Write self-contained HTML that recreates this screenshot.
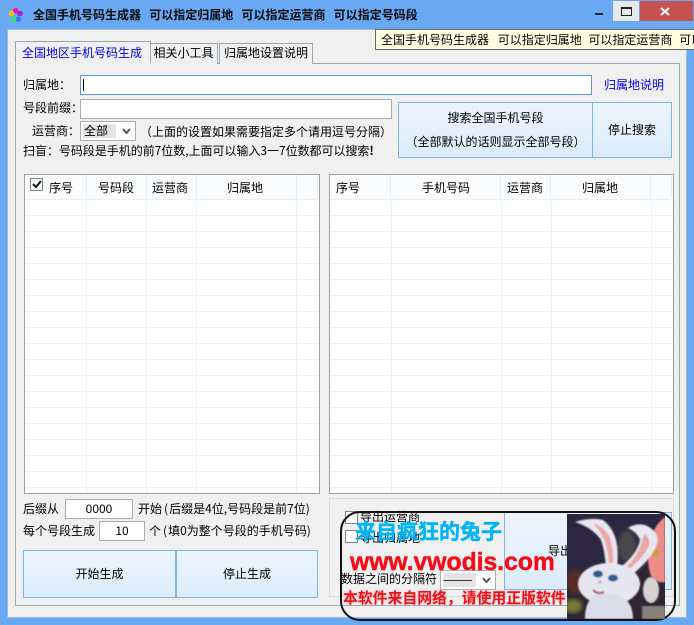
<!DOCTYPE html>
<html><head><meta charset="utf-8">
<style>
html,body{margin:0;padding:0}
body{width:694px;height:625px;position:relative;overflow:hidden;background:#69a9f3;font-family:"WenQuanYi Zen Hei","Noto Sans CJK SC",sans-serif;font-size:12px;color:#000}
.a{position:absolute;box-sizing:border-box;white-space:nowrap}
.t{position:absolute;white-space:nowrap;line-height:16px;height:16px}
.btn{position:absolute;box-sizing:border-box;border:1px solid #7eb4ea;background:linear-gradient(#ecf4fc,#dcecfc);text-align:center}
.in{position:absolute;box-sizing:border-box;background:#fff;border:1px solid #abadb3;text-align:center;line-height:18px}
.sel{position:absolute;box-sizing:border-box;background:#fff;border:1px solid #abadb3}
.grid{position:absolute;box-sizing:border-box;background:#fff;border:1px solid #a0a0a0;overflow:hidden}
.tab{position:absolute;box-sizing:border-box;background:#f0f0f0;border:1px solid #98a8b4;border-bottom:0;text-align:center;line-height:18px}
</style></head><body>

<!-- title bar -->
<svg class="a" style="left:8px;top:6px" width="18" height="18" viewBox="0 0 18 18">
<circle cx="7.700" cy="4.700" r="2.800" fill="#f0149c"/><circle cx="12" cy="7.500" r="2.800" fill="#9a28d8"/><circle cx="10.300" cy="13.300" r="2.800" fill="#3c78e8"/><circle cx="5.300" cy="13" r="2.800" fill="#38e070"/><circle cx="3.300" cy="7.300" r="2.800" fill="#f8b818"/>
</svg>
<div class="t" style="left:33px;top:7px;font-weight:bold;word-spacing:5.500px;color:#0a0a0a">全国手机号码生成器 可以指定归属地 可以指定运营商 可以指定号码段</div>
<div class="a" style="left:595px;top:13px;width:8px;height:2px;background:#222"></div>
<div class="a" style="left:613px;top:1px;width:26px;height:20px;background:#e8e8e8"></div>
<div class="a" style="left:621px;top:7px;width:11px;height:9px;border:1px solid #222;border-top-width:2px"></div>
<div class="a" style="left:640px;top:1px;width:53px;height:20px;background:#c75050"></div>
<svg class="a" style="left:660px;top:7px" width="10" height="9" viewBox="0 0 10 9"><path d="M1 1L9 8M9 1L1 8" stroke="#fff" stroke-width="2"/></svg>

<!-- client -->
<div class="a" style="left:7px;top:29px;width:680px;height:589px;background:#f0f0f0;border:1px solid #a0bcdc"></div>
<div class="a" style="left:15px;top:63px;width:665px;height:543px;background:#f0f0f0;border:1px solid #9aa8b4"></div>

<!-- tabs -->
<div class="tab" style="left:15px;top:41px;width:136px;height:23px;border-bottom:1px solid #f0f0f0;color:#0000f0;line-height:22px;z-index:2;padding-right:2px">全国地区手机号码生成</div>
<div class="tab" style="left:150px;top:43px;width:68px;height:21px;padding-right:1px">相关小工具</div>
<div class="tab" style="left:219px;top:43px;width:94px;height:21px;">归属地设置说明</div>

<!-- tooltip -->
<div class="a" style="left:375px;top:29px;width:319px;height:21px;background:#ffffe1;border-left:1px solid #666;border-bottom:1px solid #666;border-top:1px solid #666;z-index:3;overflow:hidden">
<span class="t" style="left:5px;top:2px;word-spacing:4px"><span style="margin-right:2px">全国手机号码生成器</span> 可以指定归属地 可以指定运营商 可以指定号码段</span></div>

<!-- form -->
<div class="t" style="left:23px;top:77px">归属地：</div>
<div class="in" style="left:80px;top:75px;width:512px;height:20px;border-color:#569de5"></div>
<div class="a" style="left:83px;top:79px;width:1px;height:12px;background:#000"></div>
<div class="t" style="left:604px;top:77px;color:#0000f0">归属地说明</div>
<div class="t" style="left:23px;top:100px">号段前缀：</div>
<div class="in" style="left:80px;top:99px;width:312px;height:20px"></div>
<div class="t" style="left:32px;top:123px">运营商：</div>
<div class="sel" style="left:80px;top:121px;width:56px;height:20px">
<div class="a" style="left:2px;top:2px;width:33px;height:14px;background:#e4e4e4;line-height:14px;padding-left:1px">全部</div>
<svg class="a" style="left:41px;top:6px" width="9" height="7" viewBox="0 0 9 7"><path d="M1 1L4.500 5L8 1" stroke="#555" stroke-width="2" fill="none"/></svg>
</div>
<div class="t" style="left:140px;top:124px">（上面的设置如果需要指定多个请用逗号分隔）</div>
<div class="t" style="left:23px;top:143px;letter-spacing:-.03px">扫盲：号码段是手机的前7位数,上面可以输入3一7位数都可以搜索<b>!</b></div>

<div class="btn" style="left:398px;top:102px;width:195px;height:56px;line-height:24px;padding-top:3px">搜索全国手机号段<br>（全部默认的话则显示全部号段）</div>
<div class="btn" style="left:592px;top:102px;width:80px;height:56px;line-height:54px">停止搜索</div>

<!-- left grid -->
<div class="grid" style="left:24px;top:174px;width:296px;height:320px">
<svg class="a" style="left:0;top:0" width="294" height="318">
<rect x="0" y="0" width="294" height="24" fill="#fafcfe"/>
<path d="M61.500 0V24M121.500 0V24M171.500 0V24M271.500 0V24M292.500 0V24M0 24.500H292" stroke="#e4f0fa" fill="none"/>
<path d="M61.500 25V318M121.500 25V318M171.500 25V318M271.500 25V318M0 40.500H294M0 56.500H294M0 72.500H294M0 88.500H294M0 104.500H294M0 120.500H294M0 136.500H294M0 152.500H294M0 168.500H294M0 184.500H294M0 200.500H294M0 216.500H294M0 232.500H294M0 248.500H294M0 264.500H294M0 280.500H294M0 296.500H294M0 312.500H294" stroke="#f0f0f0" fill="none"/>
</svg>
<div class="a" style="left:5px;top:3px;width:13px;height:13px;border:1px solid #7a8a8a;background:#fff"></div>
<svg class="a" style="left:7px;top:5px" width="10" height="9" viewBox="0 0 10 9"><path d="M1 4L4 7L9 1" stroke="#111" stroke-width="2" fill="none"/></svg>
<div class="t" style="left:24px;top:5px">序号</div>
<div class="t" style="left:73px;top:5px">号码段</div>
<div class="t" style="left:127px;top:5px">运营商</div>
<div class="t" style="left:202px;top:5px">归属地</div>
</div>

<!-- right grid -->
<div class="grid" style="left:329px;top:174px;width:345px;height:320px">
<svg class="a" style="left:0;top:0" width="343" height="318">
<rect x="0" y="0" width="343" height="24" fill="#fafcfe"/>
<path d="M60.500 0V24M170.500 0V24M220.500 0V24M320.500 0V24M341.500 0V24M0 24.500H341" stroke="#e4f0fa" fill="none"/>
<path d="M61.500 25V318M171.500 25V318M221.500 25V318M321.500 25V318M0 40.500H343M0 56.500H343M0 72.500H343M0 88.500H343M0 104.500H343M0 120.500H343M0 136.500H343M0 152.500H343M0 168.500H343M0 184.500H343M0 200.500H343M0 216.500H343M0 232.500H343M0 248.500H343M0 264.500H343M0 280.500H343M0 296.500H343M0 312.500H343" stroke="#f0f0f0" fill="none"/>
</svg>
<div class="t" style="left:6px;top:5px">序号</div>
<div class="t" style="left:92px;top:5px">手机号码</div>
<div class="t" style="left:177px;top:5px">运营商</div>
<div class="t" style="left:252px;top:5px">归属地</div>
</div>

<!-- bottom left -->
<div class="t" style="left:23px;top:501px">后缀从</div>
<div class="in" style="left:65px;top:499px;width:68px;height:20px">0000</div>
<div class="t" style="left:138px;top:501px">开始<span style="margin:0 1px 0 2px">(</span>后缀是4位,号码段是前7位)</div>
<div class="t" style="left:23px;top:523px">每个号段生成</div>
<div class="in" style="left:99px;top:521px;width:46px;height:20px">10</div>
<div class="t" style="left:149px;top:523px">个<span style="margin:0 1px 0 2px">(</span>填0为整个号段的手机号码)</div>
<div class="btn" style="left:23px;top:550px;width:154px;height:48px;line-height:46px;border-right-width:2px">开始生成</div>
<div class="btn" style="left:176px;top:550px;width:142px;height:48px;line-height:46px">停止生成</div>

<!-- bottom right -->
<div class="a" style="left:329px;top:498px;width:345px;height:99px;border:1px solid #dcdcdc"></div>
<div class="a" style="left:345px;top:511px;width:13px;height:13px;border:1px solid #7a8a8a;background:#fff"></div>
<div class="t" style="left:360px;top:509px">导出运营商</div>
<div class="a" style="left:345px;top:530px;width:13px;height:13px;border:1px solid #7a8a8a;background:#fff"></div>
<div class="t" style="left:360px;top:530px">导出归属地</div>
<div class="t" style="left:341px;top:571px">数据之间的分隔符</div>
<div class="sel" style="left:440px;top:570px;width:56px;height:20px">
<div class="a" style="left:2px;top:2px;width:33px;height:14px;background:#e4e4e4;line-height:14px;overflow:hidden">———</div>
<svg class="a" style="left:41px;top:6px" width="9" height="7" viewBox="0 0 9 7"><path d="M1 1L4.500 5L8 1" stroke="#555" stroke-width="2" fill="none"/></svg>
</div>
<div class="btn" style="left:504px;top:512px;width:168px;height:78px;line-height:76px;text-align:left;padding-left:43px">导出</div>

<!-- watermark overlay -->
<div class="a" style="left:340px;top:511px;width:336px;height:110px;border:2px solid #111;border-radius:20px;z-index:5"></div>
<svg class="a" style="left:567px;top:514px;z-index:6" width="98" height="105" viewBox="0 0 98 105">
<defs><filter id="b"><feGaussianBlur stdDeviation="0.800"/></filter><filter id="c"><feGaussianBlur stdDeviation="2.500"/></filter></defs>
<rect width="98" height="105" fill="#2c2640"/>
<rect x="0" y="55" width="98" height="50" fill="#2e2530" filter="url(#c)"/>
<ellipse cx="60" cy="32" rx="9" ry="16" fill="#4c4a4c" filter="url(#c)"/>
<ellipse cx="8" cy="68" rx="9" ry="12" fill="#5a2a2a" filter="url(#c)"/>
<ellipse cx="6" cy="92" rx="9" ry="7" fill="#7a7a38" filter="url(#c)"/>
<path d="M98 3 Q84 14 84 30 Q78 44 84 62 Q92 70 98 68Z" fill="#ee8c88" filter="url(#b)"/>
<ellipse cx="88" cy="39" rx="5" ry="3" fill="#c8a040"/>
<ellipse cx="84" cy="76" rx="8" ry="13" fill="#d6d2d4" filter="url(#b)"/>
<rect x="75" y="92" width="23" height="13" fill="#8a8078" filter="url(#b)"/>
<g filter="url(#b)">
<path d="M8 8 Q24 3 36 6 Q46 14 49 26 Q52 38 50 54 L39 54 Q38 38 34 26 Q26 14 8 8Z" fill="#e8e6f0"/>
<path d="M26 9 Q38 13 43 24 Q47 36 46 50 L42 50 Q41 36 38 27 Q33 17 26 9Z" fill="#eaa6a8"/>
<path d="M61 14 Q68 9 78 11 Q90 16 91 26 Q88 42 66 60 L55 52 Q70 40 73 26 Q70 18 61 14Z" fill="#e8e6f0"/>
<path d="M77 20 Q84 24 82 32 Q76 44 62 55 L60 52 Q72 42 77 20Z" fill="#eaa6a8"/>
<ellipse cx="42" cy="70" rx="31" ry="21" fill="#e6e6f0"/>
<path d="M18 105 Q18 78 40 80 Q66 80 66 105Z" fill="#dcdcea"/>
<ellipse cx="31" cy="60" rx="5" ry="3.500" fill="#34578c"/>
<ellipse cx="46" cy="64" rx="5" ry="3.500" fill="#34578c"/>
<ellipse cx="33" cy="68" rx="2" ry="1.500" fill="#e09aa4"/>
<path d="M26 76 Q31 81 37 78" stroke="#a04a50" stroke-width="2" fill="none"/>
</g>
</svg>
<div class="a" style="left:355px;top:518px;z-index:7;color:#00b4fa;font-size:21px;font-weight:bold;line-height:26px;font-family:'Noto Sans CJK SC',sans-serif;-webkit-text-stroke:.4px #00b4fa">来自疯狂的兔子</div>
<div class="a" style="left:350px;top:548px;z-index:7;color:#fa0a14;font-size:24.700px;font-weight:bold;line-height:30px;font-family:'Liberation Sans',sans-serif;-webkit-text-stroke:.4px #fa0a14">www.vwodis.com</div>
<div class="a" style="left:343px;top:588px;z-index:7;color:#f01018;font-size:14.850px;font-weight:bold;line-height:20px;font-family:'Noto Sans CJK SC',sans-serif;text-shadow:0 0 2px #ffb0b0">本软件来自网络，请使用正版软件</div>
</body></html>
